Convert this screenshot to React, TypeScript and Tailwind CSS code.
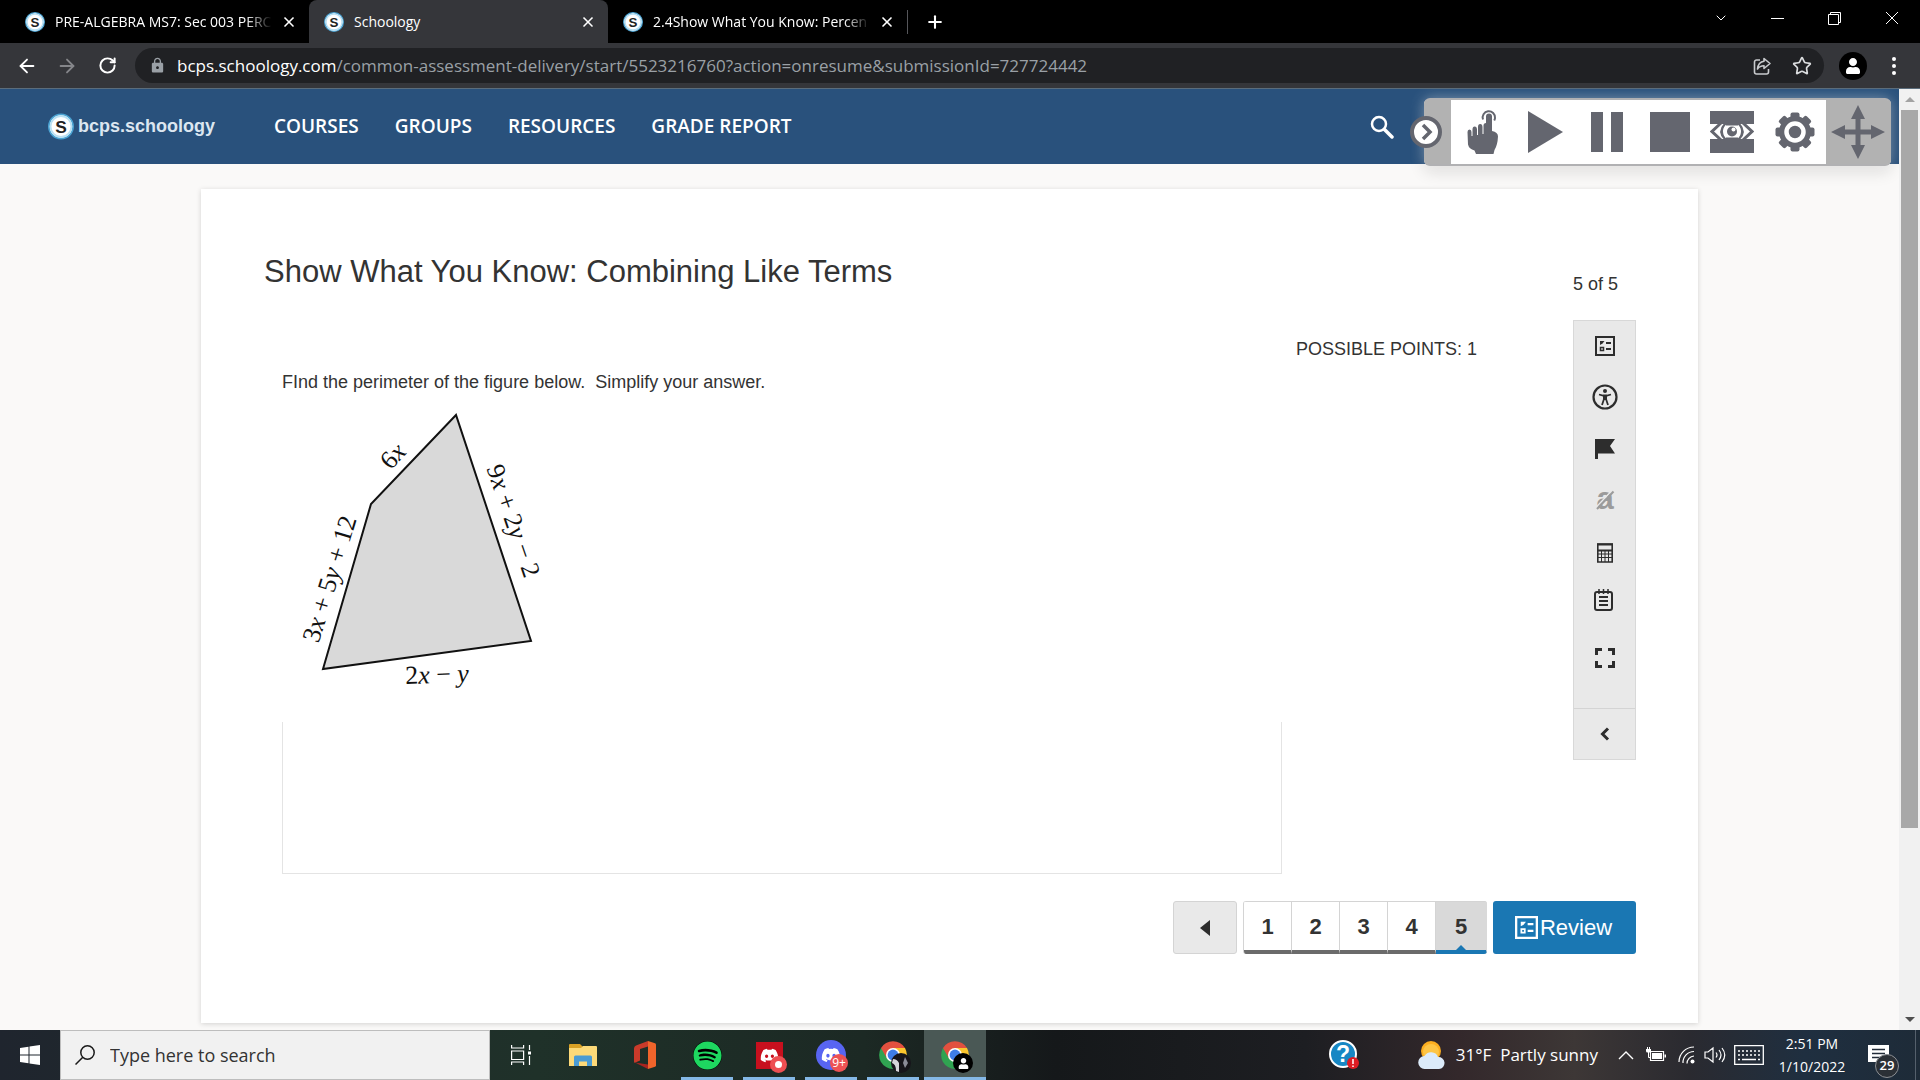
import React, { useState } from 'react';
import { FaSpotify, FaDiscord, FaUser } from 'react-icons/fa';
import { MdLock } from 'react-icons/md';
import { ArrowLeft, ArrowRight, ChevronDown, Plus, RotateCw, Star, X } from 'lucide-react';

const tabs = [
  { title: 'PRE-ALGEBRA MS7: Sec 003 PERC', active: false },
  { title: 'Schoology', active: true },
  { title: '2.4Show What You Know: Percen', active: false },
];

const navLinks = ['COURSES', 'GROUPS', 'RESOURCES', 'GRADE REPORT'];

function SchoologyMark({ className }: { className?: string }) {
  return (
    <svg viewBox="0 0 30 30" className={className} aria-hidden="true">
      <circle cx="15" cy="15" r="14" fill="#fff" stroke="#4ba3d3" strokeWidth="2" />
      <circle cx="15" cy="15" r="12" fill="none" stroke="#b9e0f3" strokeWidth="2" />
      <text x="15" y="22" textAnchor="middle" fontFamily="Liberation Sans, sans-serif" fontWeight="700" fontSize="20" fill="#222">
        S
      </text>
    </svg>
  );
}

function TabStrip() {
  return (
    <div className="flex h-[43px] items-center bg-black pl-2.5 text-white">
      {tabs.map((tab) => (
        <div
          key={tab.title}
          className={`flex h-full w-[299px] shrink-0 items-center pl-[15px] pr-2.5 ${
            tab.active ? 'rounded-t-lg bg-[#35363a]' : ''
          }`}
        >
          <SchoologyMark className="size-5 shrink-0" />
          <span
            className={`ml-2.5 flex-1 overflow-hidden whitespace-nowrap text-[14px] ${
              tab.active ? '' : '[mask-image:linear-gradient(to_right,black_88%,transparent)]'
            }`}
          >
            {tab.title}
          </span>
          <button aria-label={`Close ${tab.title}`} className="ml-[7px] p-0.5">
            <X className="size-4" strokeWidth={2.5} />
          </button>
        </div>
      ))}
      <span className="h-6 w-px bg-[#55565a]" />
      <button aria-label="New tab" className="ml-[17px]">
        <Plus className="size-5" strokeWidth={2.5} />
      </button>
      <div className="ml-auto flex h-9 items-center self-start">
        <button aria-label="Search tabs" className="flex w-[57px] justify-center">
          <ChevronDown className="size-4" strokeWidth={1.5} />
        </button>
        <button aria-label="Minimize" className="flex w-[57px] justify-center">
          <span className="h-px w-[13px] bg-white" />
        </button>
        <button aria-label="Restore" className="flex w-[57px] justify-center">
          <svg viewBox="0 0 13 13" className="size-[13px]" fill="none" stroke="#fff">
            <path d="M.5 2.5h10v10H.5zM2.5 2.5v-2h10v10h-2" />
          </svg>
        </button>
        <button aria-label="Close window" className="flex w-[57px] justify-center">
          <svg viewBox="0 0 14 14" className="size-3.5" fill="none" stroke="#fff">
            <path d="M1 1l12 12M13 1L1 13" />
          </svg>
        </button>
      </div>
    </div>
  );
}

function AddressBar() {
  return (
    <div className="flex h-[46px] items-center border-b border-[#5b6d7c] bg-[#35363a] text-white">
      <button aria-label="Back" className="ml-[7px] flex w-10 justify-center">
        <ArrowLeft className="size-[22px]" />
      </button>
      <button aria-label="Forward" className="flex w-10 justify-center text-[#85868a]">
        <ArrowRight className="size-[22px]" />
      </button>
      <button aria-label="Reload" className="flex w-10 justify-center">
        <RotateCw className="size-[19px]" strokeWidth={2.5} />
      </button>
      <div className="ml-2 flex h-[35px] flex-1 items-center rounded-full bg-[#202124] pl-3.5 pr-3">
        <MdLock className="size-[17px] text-[#9aa0a6]" />
        <span className="ml-[11px] flex-1 whitespace-nowrap text-[17px] text-[#9aa0a6]">
          <span className="text-white">bcps.schoology.com</span>
          /common-assessment-delivery/start/5523216760?action=onresume&amp;submissionId=727724442
        </span>
        <button aria-label="Share" className="mr-5 text-[#c8cacd]">
          <svg viewBox="0 0 20 20" className="size-5" fill="none" stroke="currentColor" strokeWidth="1.6">
            <path d="M8 4H4.5A2 2 0 0 0 2.500 6v10a2 2 0 0 0 2 2h10a2 2 0 0 0 2-2v-3" />
            <path d="M12 2.500l6 5-6 5V9.800c-3 0-5 1-6.500 3.200C6 8.500 8.500 5.800 12 5.300z" strokeLinejoin="round" />
          </svg>
        </button>
        <button aria-label="Bookmark this tab" className="text-[#dcdee0]">
          <Star className="size-5" />
        </button>
      </div>
      <button aria-label="Profile" className="ml-[15px] flex size-7 items-center justify-center rounded-full bg-black">
        <FaUser className="size-4" />
      </button>
      <button aria-label="Menu" className="flex w-[53px] justify-center">
        <svg viewBox="0 0 4 18" className="h-[18px] w-1" fill="#fff">
          <circle cx="2" cy="2" r="2" />
          <circle cx="2" cy="9" r="2" />
          <circle cx="2" cy="16" r="2" />
        </svg>
      </button>
    </div>
  );
}

function HandIcon() {
  return (
    <svg viewBox="0 0 32 46" className="h-[46px] w-8" fill="#64666f">
      <path d="M1.500 23q0-2.500 2-2.500t2 2.500v4h1v-6.500q0-3 2.200-3t2.300 3V26h1v-8q0-3 2.200-3t2.300 3v7h1v-8.500q0-2.500 2.500-2.500V7.500q0-3 3-3t3 3V22q6 1 6 5.500-.5 9-3.500 13.500l-1 4H10l-1.500-3.500q-5.500-1.500-6.500-6z" />
      <path d="M17 10.500A6.200 6.200 0 1 1 29 9q0 1-.8 2.500" fill="none" stroke="#64666f" strokeWidth="2" />
    </svg>
  );
}

function EyeIcon() {
  return (
    <svg viewBox="0 0 44 42" className="h-[42px] w-11">
      <path d="M0 0h44v13H0zM0 28h44v14H0z" fill="#64666f" />
      <path d="M11 12L2 20.500 11 29M33 12l9 8.500L33 29" fill="none" stroke="#64666f" strokeWidth="3" />
      <path d="M15 13q-7 7.500 0 15M29 13q7 7.500 0 15" fill="none" stroke="#64666f" strokeWidth="2.500" />
      <path d="M16 13h12q5 7.500 0 15H16q-5-7.500 0-15z" fill="#fff" />
      <path d="M14 13h16l-2 1.500H16zM14 28h16l-2-1.500H16z" fill="#64666f" />
      <circle cx="22" cy="20.500" r="5" fill="#64666f" />
      <circle cx="23.500" cy="18.500" r="2" fill="#fff" />
    </svg>
  );
}

function GearIcon() {
  return (
    <svg viewBox="-20 -20 40 40" className="size-10">
      {[0, 45, 90, 135].map((angle) => (
        <rect key={angle} x="-4.500" y="-19.500" width="9" height="39" rx="2" fill="#64666f" transform={`rotate(${angle})`} />
      ))}
      <circle r="16" fill="#64666f" />
      <circle r="8.500" fill="none" stroke="#fff" strokeWidth="4.500" />
    </svg>
  );
}

function ReaderToolbar() {
  return (
    <div className="absolute right-2 top-[9px] z-10 flex h-[68px] w-[467px] rounded-md border-y-2 border-[#b1b1b3] bg-white shadow-[0_0_14px_rgba(255,255,255,0.4),0_6px_16px_rgba(0,0,0,0.12)]">
      <div className="relative w-[27px] rounded-l bg-[#b2b2b2]">
        <button
          aria-label="Collapse toolbar"
          className="absolute -left-3.5 top-4 flex size-8 items-center justify-center rounded-full border-4 border-[#64666f] bg-white"
        >
          <svg viewBox="0 0 14 18" className="h-[18px] w-3.5" fill="none" stroke="#64666f" strokeWidth="3.500">
            <path d="M4 2l7 7-7 7" />
          </svg>
        </button>
      </div>
      <button aria-label="Point to read" className="flex flex-1 items-center justify-center">
        <HandIcon />
      </button>
      <button aria-label="Play" className="flex flex-1 items-center justify-center">
        <svg viewBox="0 0 36 42" className="h-[42px] w-9" fill="#64666f">
          <path d="M1 0l35 21L1 42z" />
        </svg>
      </button>
      <button aria-label="Pause" className="flex flex-1 items-center justify-center gap-2">
        <span className="h-10 w-3 bg-[#64666f]" />
        <span className="h-10 w-3 bg-[#64666f]" />
      </button>
      <button aria-label="Stop" className="flex flex-1 items-center justify-center">
        <span className="size-10 bg-[#64666f]" />
      </button>
      <button aria-label="Screen mask" className="flex flex-1 items-center justify-center">
        <EyeIcon />
      </button>
      <button aria-label="Settings" className="flex flex-1 items-center justify-center">
        <GearIcon />
      </button>
      <button aria-label="Move toolbar" className="flex w-[65px] items-center justify-center rounded-r bg-[#b2b2b2] pr-0.5">
        <svg viewBox="0 0 54 54" className="size-[54px]" fill="#64666f">
          <path d="M27 0l7 14h-4.500v10.500H40V20l14 7-14 7v-4.500H29.500V40H34l-7 14-7-14h4.500V29.500H14V34L0 27l14-7v4.500h10.500V14H20z" />
        </svg>
      </button>
    </div>
  );
}

function SiteHeader() {
  return (
    <header className="flex h-[75px] items-center bg-[#29517c] pl-12 text-white">
      <a href="#home" className="flex w-[167px] items-center">
        <SchoologyMark className="size-[31px]" />
        <span className="ml-1 font-['Liberation_Sans',sans-serif] text-[18px] font-bold text-[#dce6f0]">bcps.schoology</span>
      </a>
      <nav className="ml-[59px] flex gap-9 text-[19px] font-semibold">
        {navLinks.map((link) => (
          <a key={link} href="#nav" className="whitespace-nowrap">
            {link}
          </a>
        ))}
      </nav>
      <button aria-label="Search" className="ml-auto mr-[505px]">
        <svg viewBox="0 0 24 24" className="size-6" fill="none" stroke="#fff" strokeLinecap="round">
          <circle cx="9" cy="9" r="7" strokeWidth="2.500" />
          <path d="M14.500 14.500l7.500 7.500" strokeWidth="3.500" />
        </svg>
      </button>
    </header>
  );
}

function ReviewIcon({ className }: { className?: string }) {
  return (
    <svg viewBox="0 0 20 20" className={className} fill="none" stroke="currentColor" strokeWidth="2">
      <path d="M1 1h18v18H1z" />
      <path d="M11 7h5M11 13h5" />
      <path d="M5.500 11.500h3v3h-3z" strokeWidth="1.500" />
      <path d="M5 5h4.500L7.500 7.500 5 9z" fill="currentColor" stroke="none" />
    </svg>
  );
}

function Figure() {
  return (
    <svg
      viewBox="0 0 280 300"
      className="mt-1.5 h-[300px] w-[280px]"
      role="img"
      aria-label="Quadrilateral with labelled sides"
      fontFamily="Liberation Serif, serif"
      fontSize="26"
      fill="#111"
      textAnchor="middle"
    >
      <path d="M174 15L89 104 41 269 249 241z" fill="#d9d9d9" stroke="#111" strokeWidth="2" />
      <text transform="translate(112 57) rotate(-47)" y="7">
        6<tspan fontStyle="italic">x</tspan>
      </text>
      <text transform="translate(48 179) rotate(-73)" y="8">
        3<tspan fontStyle="italic">x</tspan> + 5<tspan fontStyle="italic">y</tspan> + 12
      </text>
      <text transform="translate(231 121) rotate(71)" y="8">
        9<tspan fontStyle="italic">x</tspan> + 2<tspan fontStyle="italic">y</tspan> − 2
      </text>
      <text transform="translate(155 276) rotate(-2)" y="7">
        2<tspan fontStyle="italic">x</tspan> − <tspan fontStyle="italic">y</tspan>
      </text>
    </svg>
  );
}

function SideTools() {
  return (
    <aside className="mt-6 flex flex-col border border-[#d8d8d8] bg-[#e9e9e9] text-[#2d2d2d]">
      <button aria-label="Review" className="flex h-[50px] items-center justify-center">
        <ReviewIcon className="size-5" />
      </button>
      <button aria-label="Accessibility" className="flex h-13 items-center justify-center">
        <svg viewBox="0 0 26 26" className="size-[26px]" fill="none" stroke="currentColor">
          <circle cx="13" cy="13" r="11.500" strokeWidth="2.200" />
          <circle cx="13" cy="7" r="2" fill="currentColor" stroke="none" />
          <path d="M7 10.500l4 1h4l4-1" strokeWidth="1.800" />
          <path d="M13 11v5" strokeWidth="4" />
          <path d="M12 15l-2 6M14 15l2 6" strokeWidth="1.800" />
        </svg>
      </button>
      <button aria-label="Flag question" className="flex h-13 items-center justify-center">
        <svg viewBox="0 0 20 20" className="size-5" fill="currentColor">
          <path d="M0 0h20l-5 7 5 7.500H3V20H0z" />
        </svg>
      </button>
      <button aria-label="Answer eliminator" disabled className="flex h-13 items-center justify-center">
        <svg viewBox="-10 -10 42 42" className="size-[42px]">
          <text x="11" y="19" textAnchor="middle" fontFamily="Liberation Sans, sans-serif" fontWeight="700" fontSize="31" fill="#9b9b9b">
            a
          </text>
          <path d="M2 17.500L17 1.500" stroke="#e9e9e9" strokeWidth="1.500" />
          <path d="M3 19L19.500 1.500" stroke="#9b9b9b" strokeWidth="2" />
        </svg>
      </button>
      <button aria-label="Calculator" className="flex h-13 items-center justify-center">
        <svg viewBox="0 0 16 20" className="h-5 w-4" fill="none" stroke="currentColor">
          <path d="M.8 1h14.400v18H.8z" strokeWidth="1.600" />
          <path d="M0 1.500h16M0 7.500h16" strokeWidth="2" />
          <path d="M0 11h16M0 14.500h16M4.500 8v11M8 8v11M11.500 8v11" />
        </svg>
      </button>
      <button aria-label="Notepad" className="flex h-[42px] items-center justify-center">
        <svg viewBox="0 0 22 22" className="size-[22px]" fill="none" stroke="currentColor" strokeWidth="2">
          <rect x="1" y="3" width="17" height="18" rx="2" />
          <path d="M5 8h9M5 12h9M5 16h9" />
          <path d="M5 0v5M9.500 0v5M14 0v5" strokeWidth="1.500" />
        </svg>
      </button>
      <button aria-label="Full screen" className="flex h-[74px] items-center justify-center">
        <svg viewBox="0 0 20 20" className="size-5" fill="none" stroke="currentColor" strokeWidth="3">
          <path d="M1.500 7V1.500H7M13 1.500h5.500V7M18.500 13v5.500H13M7 18.500H1.500V13" />
        </svg>
      </button>
      <button aria-label="Collapse tools" className="mt-[13px] flex h-[51px] items-center justify-center border-t border-[#d4d4d4]">
        <svg viewBox="0 0 10 14" className="h-3.5 w-2.5" fill="none" stroke="currentColor" strokeWidth="3">
          <path d="M8 1.500L2.500 7 8 12.500" />
        </svg>
      </button>
    </aside>
  );
}

function Pager() {
  const [current, setCurrent] = useState(5);

  return (
    <div className="mt-[27px] flex h-[53px] justify-end gap-1.5">
      <button
        aria-label="Previous question"
        className="flex w-16 items-center justify-center rounded-[3px] border border-[#d4d4d4] bg-[#e9e9e9]"
      >
        <svg viewBox="0 0 10 16" className="h-4 w-2.5" fill="#2d2d2d">
          <path d="M10 0v16L0 8z" />
        </svg>
      </button>
      <div className="flex overflow-hidden rounded-[3px] border-l border-[#d4d4d4]">
        {[1, 2, 3, 4, 5].map((n) => (
          <button
            key={n}
            onClick={() => setCurrent(n)}
            className={`relative w-12 border-b-4 border-r border-t border-t-[#d4d4d4] text-[22px] font-bold last:w-[51px] ${
              n === current ? 'border-b-[#1a77b3] border-r-[#d9d9d9] bg-[#d9d9d9]' : 'border-b-[#6b6b6b] border-r-[#d4d4d4]'
            }`}
          >
            {n}
            {n === current && (
              <svg viewBox="0 0 10 5" className="absolute bottom-0 left-5 h-[5px] w-2.5" fill="#1a77b3">
                <path d="M0 5l5-5 5 5z" />
              </svg>
            )}
          </button>
        ))}
      </div>
      <button className="flex w-[143px] items-center justify-center gap-0.5 rounded-[3px] bg-[#1a77b3] pr-0.5 text-[22px] text-white">
        <ReviewIcon className="size-[23px]" />
        Review
      </button>
    </div>
  );
}

function AssessmentCard() {
  return (
    <main className="mx-[201px] mt-[25px] bg-white pb-[69px] pl-[63px] pr-[62px] pt-[62px] font-['Liberation_Sans',sans-serif] text-[#333] shadow-[0_1px_5px_rgba(0,0,0,0.16)]">
      <div className="flex">
        <section className="min-w-0 flex-1">
          <h1 className="text-[31px] leading-[42px]">Show What You Know: Combining Like Terms</h1>
          <p className="mt-11 pr-24 text-right text-[18px] leading-6">POSSIBLE POINTS: 1</p>
          <div className="ml-[18px] mr-[291px]">
            <p className="mt-[9px] whitespace-pre-wrap text-[18px] leading-6">
              {'FInd the perimeter of the figure below.  Simplify your answer.'}
            </p>
            <Figure />
            <textarea
              aria-label="Your answer"
              className="mt-[22px] block h-[152px] w-full resize-none border border-t-0 border-[#e4e4e4] outline-none"
            />
          </div>
        </section>
        <div className="w-[63px]">
          <p className="mt-[21px] whitespace-nowrap text-[18px] leading-6">5 of 5</p>
          <SideTools />
        </div>
      </div>
      <Pager />
    </main>
  );
}

function ScrollBar() {
  return (
    <div className="flex w-[21px] flex-col items-center justify-between bg-[#f1f1f1]" aria-hidden="true">
      <svg viewBox="0 0 21 21" className="size-[21px] shrink-0" fill="#a3a3a3">
        <path d="M6 13l5-5 5 5z" />
      </svg>
      <span className="h-[718px] w-[17px] bg-[#a8a8a8]" />
      <span className="flex-1" />
      <svg viewBox="0 0 21 21" className="size-[21px] shrink-0" fill="#505050">
        <path d="M6 8l5 5 5-5z" />
      </svg>
    </div>
  );
}

function ChromeLogo() {
  return (
    <svg viewBox="0 0 28 28" className="size-7">
      <path d="M14 14L2 7a14 14 0 0 0 12 21l6-10.500z" fill="#30a351" />
      <path d="M14 14l6 3.500L14 28A14 14 0 0 0 26 7H14z" fill="#fbc52d" />
      <path d="M14 7h12A14 14 0 0 0 2 7l6 10.500z" fill="#e2503f" />
      <circle cx="14" cy="14" r="7" fill="#fff" />
      <circle cx="14" cy="14" r="5.400" fill="#3f7de8" />
    </svg>
  );
}

function TaskbarApp({ label, open, active, children }: { label: string; open?: boolean; active?: boolean; children: React.ReactNode }) {
  return (
    <button
      aria-label={label}
      className={`relative flex w-[62px] items-center justify-center ${active ? 'bg-[#4a5855]' : ''}`}
    >
      {children}
      {open && <span className={`absolute bottom-0 h-[3px] bg-[#84b8e6] ${active ? 'inset-x-0' : 'inset-x-[5px]'}`} />}
    </button>
  );
}

function Taskbar() {
  return (
    <footer className="flex h-[50px] shrink-0 bg-[linear-gradient(to_right,#1f252e_0,#1f3129_28%,#1c2924_45%,#15181a_55%,#1d1e22_68%,#33282b_76%,#3d3736_82%,#2a2a30_88%,#1f2f40_94%,#1e2b38_100%)] text-white">
      <button aria-label="Start" className="flex w-[60px] items-center justify-center">
        <svg viewBox="0 0 20 20" className="size-5" fill="#fff">
          <path d="M0 3l8.500-1.200v7.700H0zM9.500 1.600L20 0v9.500H9.500zM0 10.500h8.500v7.700L0 17zM9.500 10.500H20V20L9.500 18.400z" />
        </svg>
      </button>
      <label className="flex w-[430px] items-center border border-[#bdbdbd] bg-[#f1f1f1] pl-3.5">
        <svg viewBox="0 0 20 20" className="size-5" fill="none" stroke="#1a1a1a" strokeWidth="1.500">
          <circle cx="12.500" cy="7.500" r="6.700" />
          <path d="M7.800 12.200L.5 19.500" />
        </svg>
        <input
          aria-label="Type here to search"
          placeholder="Type here to search"
          className="ml-[15px] w-0 flex-1 bg-transparent text-[18px] outline-none placeholder:text-[#333]"
        />
      </label>
      <TaskbarApp label="Task view">
        <svg viewBox="0 0 20 20" className="size-5" fill="none" stroke="#fff" strokeWidth="1.200">
          <path d="M.6 6h12v8.500H.6zM.6 0v3h12V0M.6 20v-3h12v3M18.500 0v5M18.500 11v9" />
          <path d="M17 6.500h3v3h-3z" fill="#fff" stroke="none" />
        </svg>
      </TaskbarApp>
      <TaskbarApp label="File Explorer">
        <svg viewBox="0 0 28 24" className="h-6 w-7">
          <path d="M0 2q0-1 1-1h10l3 3v6H0z" fill="#d9a125" />
          <path d="M0 5h12l2-2h13q1 0 1 1v19H0z" fill="#fcd978" />
          <path d="M5 23V14q0-1.500 1.500-1.500h15Q23 12.500 23 14v9h-5v-4.500h-8V23z" fill="#4a9bd3" />
        </svg>
      </TaskbarApp>
      <TaskbarApp label="Office">
        <svg viewBox="0 0 24 28" className="h-7 w-6">
          <path d="M15 0L3 4.500Q1 5.300 1 7.500v13q0 2 1.500 1l4.500-2V8l8-2.500z" fill="#c93a2a" />
          <path d="M2 21.500l3 .5 10 1.500V28z" fill="#a82420" />
          <path d="M15 0l7 2.300q1 .4 1 1.500v20.400q0 1-1 1.500L15 28z" fill="#f0642b" />
        </svg>
      </TaskbarApp>
      <TaskbarApp label="Spotify" open>
        <span className="rounded-full bg-black">
          <FaSpotify className="size-[29px] text-[#1ed760]" />
        </span>
      </TaskbarApp>
      <TaskbarApp label="Discord recording" open>
        <span className="relative flex size-[27px] items-center justify-center bg-[#c8101e]">
          <FaDiscord className="size-[19px]" />
          <span className="absolute -bottom-1 -right-1 flex size-[17px] items-center justify-center rounded-full bg-[#ed4f52]">
            <span className="size-[7px] rounded-full bg-white" />
          </span>
        </span>
      </TaskbarApp>
      <TaskbarApp label="Discord" open>
        <span className="relative flex size-[30px] items-center justify-center rounded-full bg-[#5865f2]">
          <FaDiscord className="size-5" />
          <span className="absolute -bottom-0.5 -right-0.5 flex size-[18px] items-center justify-center rounded-full bg-[#ed5254] text-[12px] leading-none">
            9+
          </span>
        </span>
      </TaskbarApp>
      <TaskbarApp label="Chrome" open>
        <span className="relative">
          <ChromeLogo />
          <svg viewBox="0 0 20 20" className="absolute -bottom-1 -right-1 size-5">
            <circle cx="10" cy="10" r="10" fill="#17151b" />
            <path d="M2 6q4 0 6 4l0 9-3-1q0-7-4-8z" fill="#d5d5da" />
            <path d="M14 4l3 6-3 5-2-5z" fill="#8b8c98" />
          </svg>
        </span>
      </TaskbarApp>
      <TaskbarApp label="Chrome (Schoology)" open active>
        <span className="relative">
          <ChromeLogo />
          <span className="absolute -bottom-1 -right-1 flex size-5 items-center justify-center rounded-full bg-black">
            <FaUser className="size-[11px]" />
          </span>
        </span>
      </TaskbarApp>

      <div className="ml-auto flex items-center">
        <button aria-label="Get help" className="relative mr-[59px]">
          <svg viewBox="0 0 30 30" className="size-[30px]">
            <circle cx="14" cy="14" r="13" fill="#1787c4" stroke="#fff" strokeWidth="2" />
            <text x="14" y="22" textAnchor="middle" fontFamily="Liberation Sans, sans-serif" fontWeight="700" fontSize="23" fill="#fff">
              ?
            </text>
            <circle cx="24" cy="23" r="6" fill="#dd1c23" />
            <path d="M24 19v5M24 25.500v1.500" stroke="#fff" strokeWidth="1.500" />
          </svg>
        </button>
        <button className="flex items-center whitespace-pre text-[17px]">
          <svg viewBox="0 0 28 28" className="mr-2.5 size-7">
            <circle cx="13" cy="10" r="10" fill="#fcae1f" />
            <circle cx="13" cy="11" r="8" fill="#fdc545" />
            <path d="M7 28a6.500 6.500 0 0 1-.5-13A7.500 7.500 0 0 1 20 16a6 6 0 0 1 1 12z" fill="#dcebfa" />
          </svg>
          {'31°F  Partly sunny'}
        </button>
        <button aria-label="Show hidden icons" className="ml-5">
          <svg viewBox="0 0 16 10" className="h-2.5 w-4" fill="none" stroke="#fff" strokeWidth="1.400">
            <path d="M1 9l7-7 7 7" />
          </svg>
        </button>
        <svg viewBox="0 0 20 16" className="ml-3 h-4 w-5" fill="none" stroke="#fff">
          <path d="M4.500 4.500h13v9h-13z" strokeWidth="1.200" />
          <path d="M6 6h10v6H6zM18.500 7.500H20v3h-1.500zM0 2h5v2q0 1.500-1.500 1.500h-2Q0 5.500 0 4z" fill="#fff" stroke="none" />
          <path d="M1.500 0v2M3.500 0v2M2.500 5v5.500h2" />
        </svg>
        <svg viewBox="0 0 18 18" className="ml-3 size-[18px]" fill="none" stroke="#fff" strokeWidth="1.200">
          <path d="M1 16A15 15 0 0 1 16 1M5 17A11 11 0 0 1 16 5.500M9 17.500A7.500 7.500 0 0 1 16 10" />
          <circle cx="14.500" cy="15.500" r="2" fill="#fff" stroke="none" />
        </svg>
        <svg viewBox="0 0 22 18" className="ml-2 h-[18px] w-[22px]" fill="none" stroke="#fff" strokeWidth="1.200">
          <path d="M1 6h3l5-4v14l-5-4H1zM12 6.500q2 2.500 0 5M15 4q4 5 0 10M18 2q5.500 7 0 14" />
        </svg>
        <svg viewBox="0 0 30 20" className="ml-2 h-5 w-[30px]" fill="none" stroke="#fff" strokeWidth="1.300">
          <path d="M.7.7h28.600v18.600H.7z" />
          <path d="M4 6h22M4 10h22" strokeDasharray="2 2" />
          <path d="M4 14.500h2M8 14.500h14M24 14.500h2" />
        </svg>
        <div className="ml-3.5 flex w-[68px] flex-col text-center text-[14px] leading-[23px]">
          <span>2:51 PM</span>
          <span>1/10/2022</span>
        </div>
        <button aria-label="Notifications" className="relative ml-[22px] mr-3">
          <svg viewBox="0 0 21 21" className="size-[21px]">
            <path d="M0 0h21v17h-7l-5 4v-4H0z" fill="#fff" />
            <path d="M4 4.500h13M4 8.500h13M4 12.500h9" stroke="#222c38" strokeWidth="1.300" />
          </svg>
          <span className="absolute -bottom-3 -right-2.5 flex size-6 items-center justify-center rounded-full border border-[#8c8f94] bg-[#2b3036] text-[13px] font-semibold leading-none">
            29
          </span>
        </button>
        <span className="ml-3.5 mr-1 h-[50px] w-px bg-[#55606c]" />
      </div>
    </footer>
  );
}

export default function App() {
  return (
    <div className="flex h-screen flex-col overflow-hidden font-['Open_Sans',sans-serif]">
      <TabStrip />
      <AddressBar />
      <div className="flex min-h-0 flex-1">
        <div className="relative min-w-0 flex-1 overflow-hidden bg-[#faf9f8]">
          <SiteHeader />
          <ReaderToolbar />
          <AssessmentCard />
        </div>
        <ScrollBar />
      </div>
      <Taskbar />
    </div>
  );
}
